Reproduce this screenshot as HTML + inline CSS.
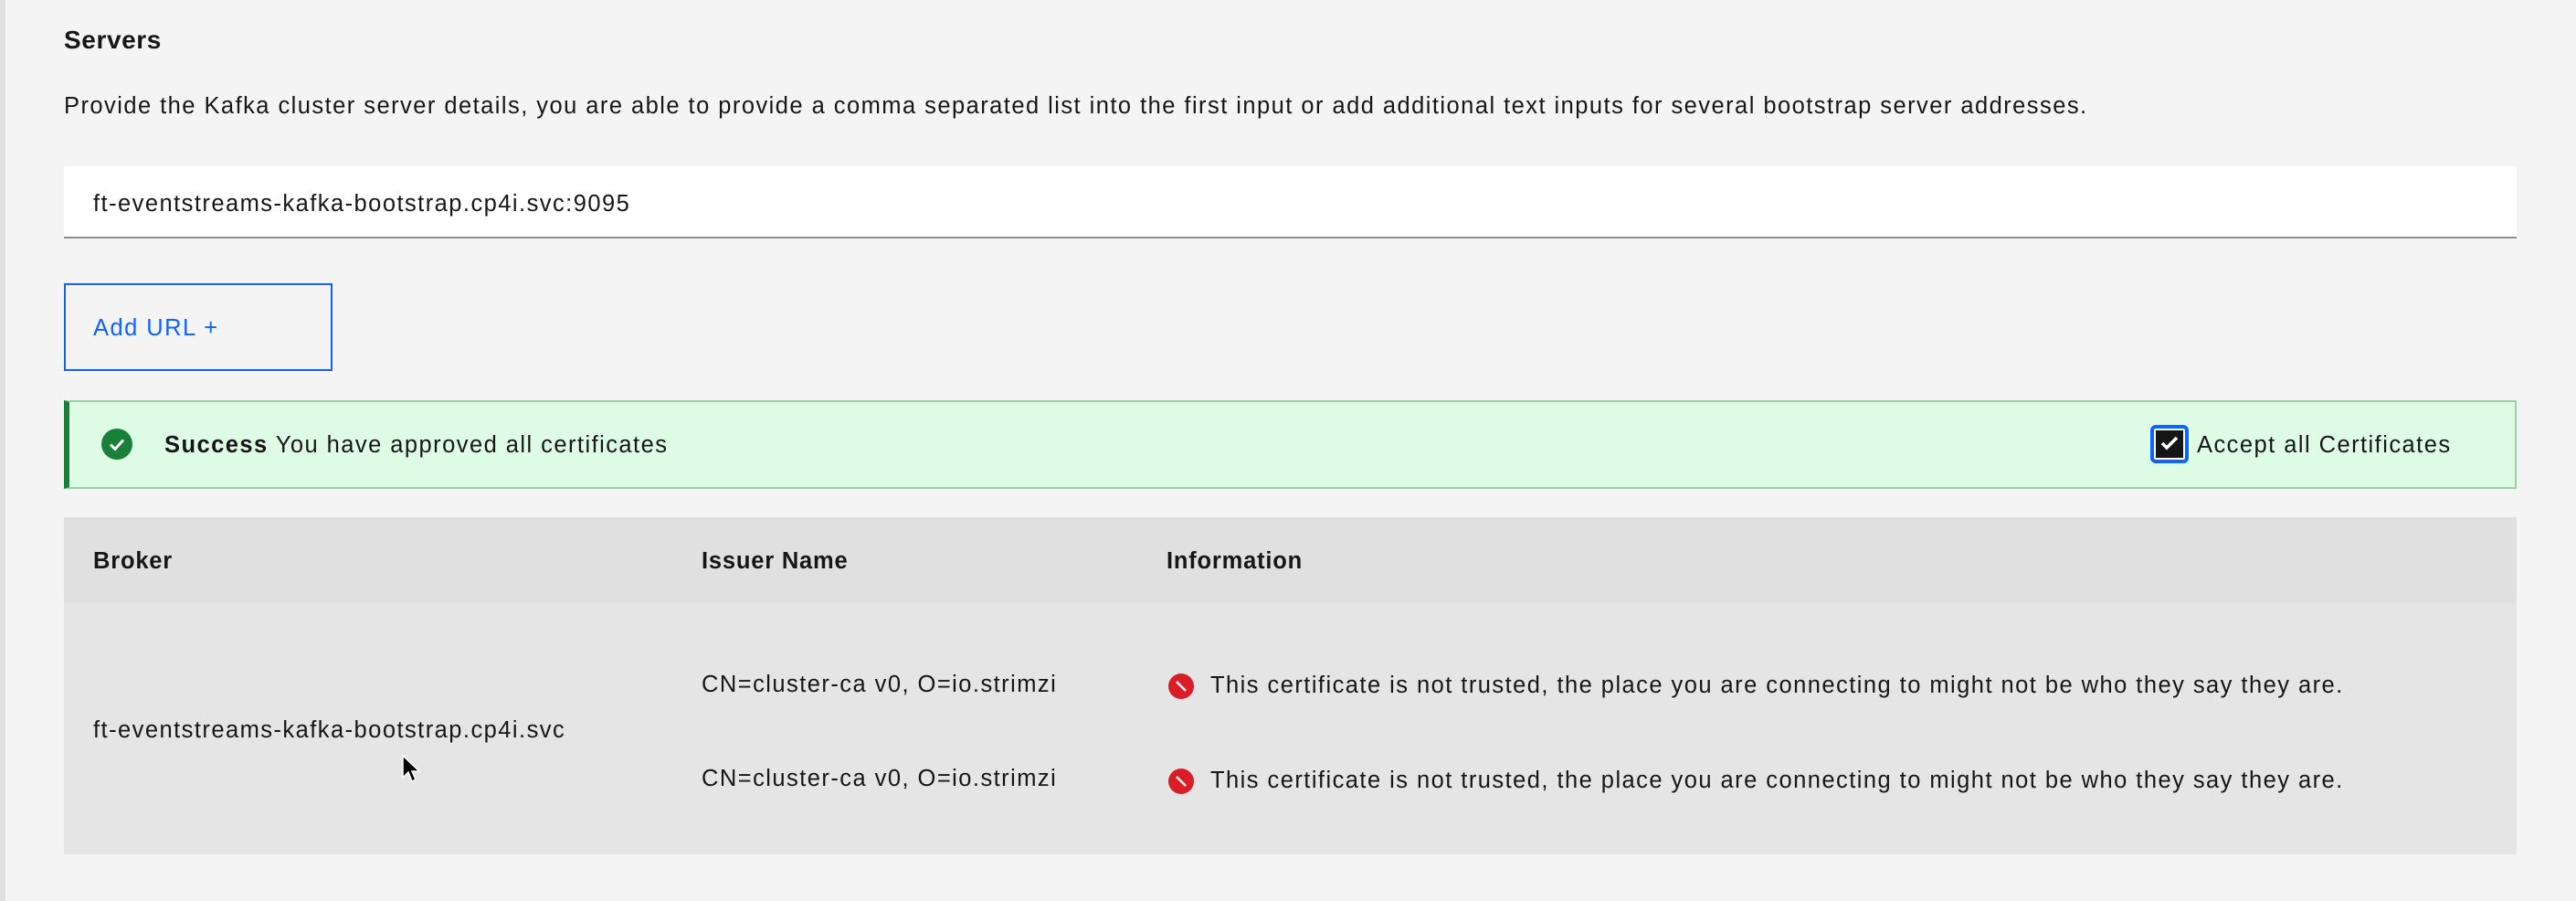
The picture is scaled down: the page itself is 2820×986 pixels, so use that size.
<!DOCTYPE html>
<html><head><meta charset="utf-8"><style>
*{margin:0;padding:0;box-sizing:border-box}
body{width:2820px;height:986px;background:#f4f4f4;font-family:"Liberation Sans",sans-serif;color:#161616;position:relative;overflow:hidden;letter-spacing:1.45px}
.a{position:absolute;white-space:nowrap}
</style></head><body>
<div class="a" style="left:0;top:0;width:6px;height:986px;background:#e0e0e0"></div>
<div class="a" style="left:70px;top:27px;font-size:28px;font-weight:bold;line-height:34px;letter-spacing:0.6px">Servers</div>
<div class="a" style="left:70px;top:101px;font-size:25.5px;line-height:30px">Provide the Kafka cluster server details, you are able to provide a comma separated list into the first input or add additional text inputs for several bootstrap server addresses.</div>
<div class="a" style="left:70px;top:182px;width:2685px;height:79px;background:#fff;border-bottom:2px solid #8d8d8d"></div>
<div class="a" style="left:102px;top:208px;font-size:25.5px;line-height:30px">ft-eventstreams-kafka-bootstrap.cp4i.svc:9095</div>
<div class="a" style="left:70px;top:310px;width:294px;height:96px;border:2px solid #0f62fe"></div>
<div class="a" style="left:102px;top:344px;font-size:25.5px;line-height:30px;color:#0f62fe">Add URL +</div>
<div class="a" style="left:70px;top:438px;width:2685px;height:97px;background:#defbe6;border:2px solid #9fd0a5;border-left:6px solid #198038"></div>
<svg class="a" style="left:110px;top:468px" width="36" height="36" viewBox="0 0 36 36"><circle cx="18" cy="18" r="17" fill="#198038"/><path d="M11 18.5l5 5 9-10" stroke="#fff" stroke-width="3" fill="none"/></svg>
<div class="a" style="left:180px;top:472px;font-size:25.5px;line-height:30px"><b>Success</b> You have approved all certificates</div>
<div class="a" style="left:2354px;top:465px;width:42px;height:42px;border:4px solid #0f62fe;border-radius:6px;background:#fff;padding:2px"><div style="width:100%;height:100%;background:#161616;position:relative"><svg style="position:absolute;left:5px;top:6px" width="20" height="16" viewBox="0 0 20 16"><path d="M2 8l5 5 11-11" stroke="#fff" stroke-width="3.5" fill="none"/></svg></div></div>
<div class="a" style="left:2405px;top:472px;font-size:25.5px;line-height:30px">Accept all Certificates</div>
<div class="a" style="left:70px;top:566px;width:2685px;height:94px;background:#e0e0e0"></div>
<div class="a" style="left:70px;top:660px;width:2685px;height:275px;background:#e5e5e5"></div>
<div class="a" style="left:102px;top:599px;font-size:25.5px;font-weight:bold;line-height:30px;letter-spacing:0.8px">Broker</div>
<div class="a" style="left:768px;top:599px;font-size:25.5px;font-weight:bold;line-height:30px;letter-spacing:0.8px">Issuer Name</div>
<div class="a" style="left:1277px;top:599px;font-size:25.5px;font-weight:bold;line-height:30px;letter-spacing:0.8px">Information</div>
<div class="a" style="left:102px;top:784px;font-size:25.5px;line-height:30px">ft-eventstreams-kafka-bootstrap.cp4i.svc</div>
<div class="a" style="left:768px;top:734px;font-size:25.5px;line-height:30px">CN=cluster-ca v0, O=io.strimzi</div>
<div class="a" style="left:768px;top:837px;font-size:25.5px;line-height:30px">CN=cluster-ca v0, O=io.strimzi</div>
<svg class="a" style="left:1279px;top:737px" width="28" height="28" viewBox="0 0 28 28"><circle cx="14" cy="14" r="14" fill="#da1e28"/><path d="M9 9l10 10" stroke="#fff" stroke-width="2.5"/></svg>
<svg class="a" style="left:1279px;top:841px" width="28" height="28" viewBox="0 0 28 28"><circle cx="14" cy="14" r="14" fill="#da1e28"/><path d="M9 9l10 10" stroke="#fff" stroke-width="2.5"/></svg>
<div class="a" style="left:1325px;top:735px;font-size:25.5px;line-height:30px">This certificate is not trusted, the place you are connecting to might not be who they say they are.</div>
<div class="a" style="left:1325px;top:839px;font-size:25.5px;line-height:30px">This certificate is not trusted, the place you are connecting to might not be who they say they are.</div>
<svg class="a" style="left:440px;top:826px" width="20" height="32" viewBox="0 0 20 32"><path d="M1 1v24l6-6 4 10 4-2-4-9h8z" fill="#000" stroke="#fff" stroke-width="1.5"/></svg>
</body></html>
